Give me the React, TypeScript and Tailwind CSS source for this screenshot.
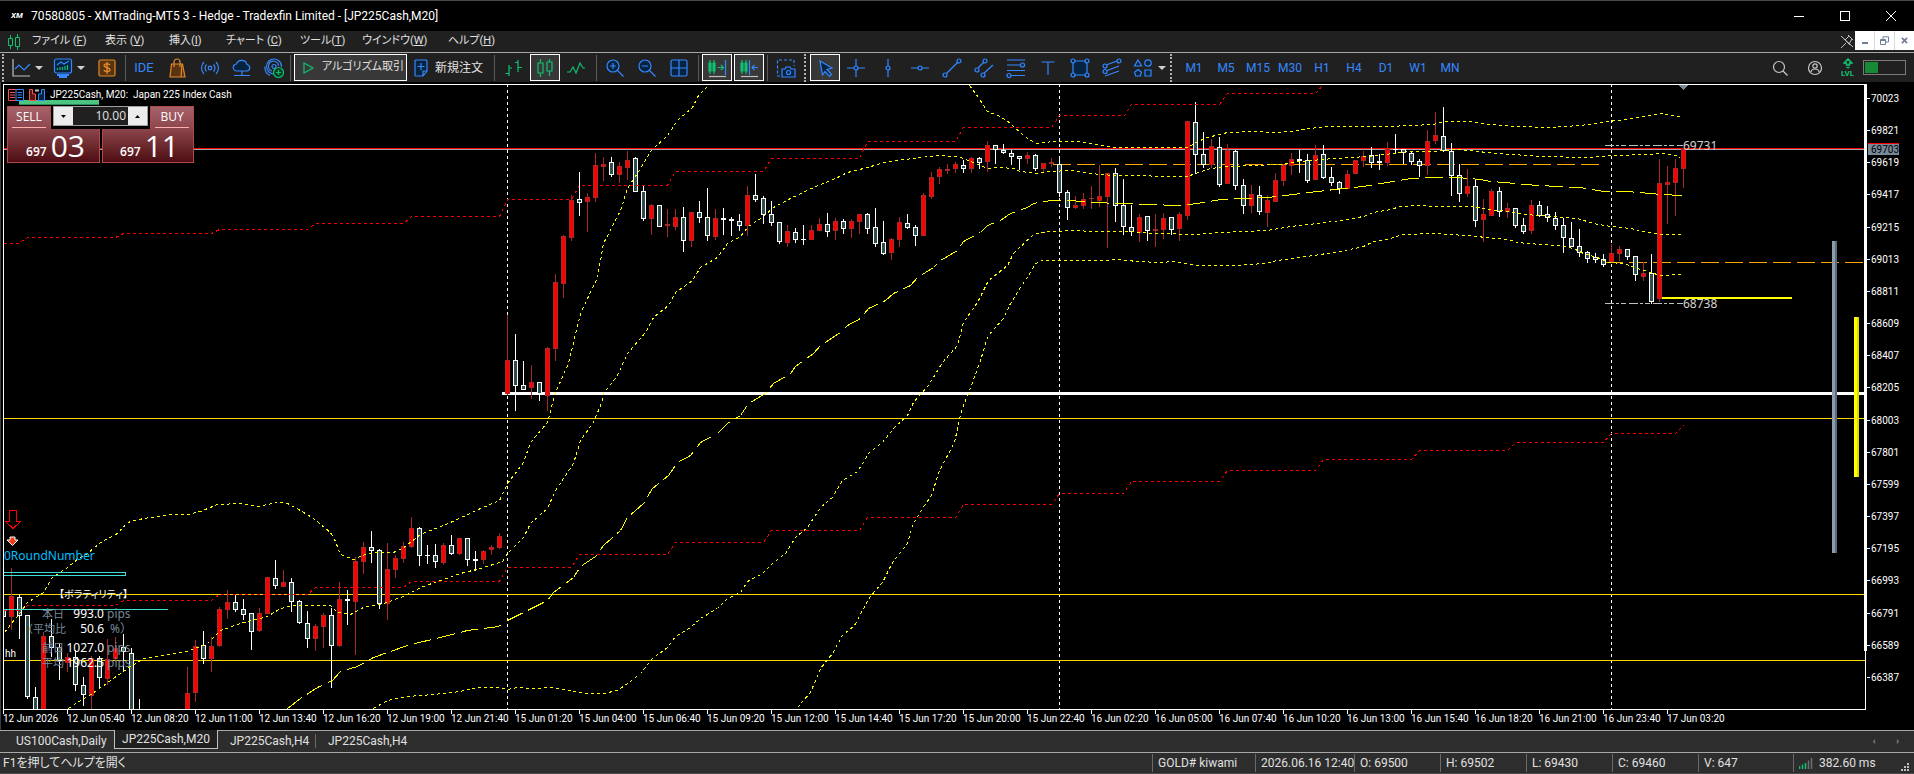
import React from "react";

type Candle = [up: number, high: number, top: number, bottom: number, low: number];

// One row per 20 minute bar, bars sit 8px apart starting at x = 3.
const CANDLES: Candle[] = [
  [0, 609, 609, 617, 617], [1, 568, 596, 617, 630], [0, 594, 597, 616, 639], [0, 615, 615, 697, 699],
  [0, 687, 697, 720, 720], [1, 632, 636, 720, 720], [0, 619, 636, 648, 657], [0, 643, 647, 661, 680],
  [1, 653, 657, 663, 672], [0, 650, 657, 685, 691], [0, 677, 685, 695, 706], [1, 656, 658, 696, 720],
  [0, 656, 658, 678, 688], [1, 639, 659, 679, 685], [1, 637, 648, 659, 662], [0, 634, 647, 652, 671],
  [0, 648, 653, 720, 720], [0, 699, 715, 720, 720], [0, 715, 716, 720, 720], [0, 715, 716, 720, 720],
  [0, 715, 716, 720, 720], [0, 715, 716, 720, 720], [0, 715, 716, 720, 720], [1, 667, 693, 720, 720],
  [1, 640, 646, 693, 702], [0, 631, 645, 659, 664], [1, 637, 646, 659, 672], [1, 607, 609, 646, 647],
  [1, 590, 602, 610, 619], [0, 595, 602, 610, 612], [0, 599, 609, 615, 620], [0, 613, 613, 632, 650],
  [1, 608, 613, 631, 632], [1, 577, 577, 614, 614], [0, 560, 578, 586, 589], [1, 570, 582, 587, 587],
  [0, 578, 582, 602, 612], [0, 600, 601, 623, 624], [0, 611, 623, 639, 648], [1, 624, 626, 639, 651],
  [1, 613, 615, 627, 648], [0, 608, 615, 646, 688], [1, 582, 599, 646, 647], [0, 590, 599, 601, 625],
  [1, 557, 561, 602, 655], [1, 542, 547, 562, 574], [0, 531, 547, 551, 563], [0, 549, 550, 604, 609],
  [1, 543, 569, 604, 620], [1, 555, 558, 570, 578], [1, 542, 546, 559, 563], [1, 517, 528, 547, 548],
  [0, 527, 528, 556, 566], [0, 545, 555, 556, 564], [0, 544, 555, 562, 568], [1, 543, 545, 563, 565],
  [0, 535, 545, 554, 555], [1, 538, 538, 554, 555], [0, 538, 538, 560, 566], [0, 551, 559, 561, 571],
  [1, 550, 551, 560, 564], [1, 545, 547, 550, 555], [1, 533, 536, 548, 549], [1, 315, 360, 394, 395],
  [0, 334, 360, 386, 411], [0, 361, 385, 390, 390], [1, 365, 382, 388, 399], [0, 382, 382, 394, 401],
  [1, 347, 348, 396, 411], [1, 274, 282, 349, 361], [1, 235, 236, 284, 298], [1, 195, 200, 238, 241],
  [0, 172, 199, 203, 216], [1, 193, 197, 202, 232], [1, 153, 165, 198, 202], [1, 157, 164, 167, 181],
  [0, 157, 162, 175, 177], [1, 162, 166, 175, 183], [1, 151, 160, 168, 180], [0, 157, 158, 192, 192],
  [0, 186, 191, 219, 221], [1, 204, 205, 219, 235], [0, 205, 205, 227, 227], [1, 209, 224, 226, 237],
  [1, 209, 217, 227, 230], [0, 207, 217, 241, 252], [1, 212, 212, 241, 247], [0, 201, 212, 218, 223],
  [0, 188, 217, 236, 241], [1, 209, 218, 237, 240], [0, 208, 218, 220, 235], [0, 217, 219, 221, 236],
  [0, 214, 221, 226, 231], [1, 186, 195, 226, 236], [0, 174, 195, 200, 202], [0, 196, 198, 215, 224],
  [0, 201, 214, 223, 226], [0, 222, 222, 242, 244], [1, 225, 231, 243, 247], [0, 228, 232, 240, 243],
  [0, 225, 239, 240, 245], [1, 225, 230, 240, 240], [1, 218, 224, 231, 231], [0, 213, 224, 232, 237],
  [1, 218, 221, 231, 240], [0, 219, 221, 229, 234], [1, 219, 221, 229, 238], [1, 214, 214, 222, 234],
  [0, 213, 214, 229, 234], [0, 208, 227, 244, 247], [0, 221, 242, 254, 255], [1, 238, 239, 253, 260],
  [1, 217, 222, 240, 247], [0, 214, 223, 228, 229], [0, 225, 227, 236, 246], [1, 193, 195, 236, 236],
  [1, 172, 177, 197, 199], [1, 167, 169, 177, 184], [1, 164, 169, 171, 174], [1, 162, 164, 169, 173],
  [0, 160, 165, 169, 173], [1, 157, 158, 169, 173], [0, 157, 158, 163, 169], [1, 141, 145, 162, 172],
  [0, 145, 145, 150, 164], [0, 144, 150, 153, 154], [0, 150, 153, 157, 165], [0, 156, 156, 159, 170],
  [1, 152, 155, 159, 164], [0, 154, 155, 169, 171], [1, 163, 163, 169, 172], [1, 158, 162, 164, 167],
  [0, 156, 164, 193, 197], [0, 190, 192, 208, 220], [1, 196, 205, 208, 209], [1, 193, 199, 206, 209],
  [1, 186, 198, 199, 209], [1, 165, 196, 201, 207], [1, 173, 173, 197, 248], [0, 168, 173, 206, 222],
  [0, 179, 205, 227, 235], [0, 205, 227, 232, 236], [1, 214, 217, 233, 242], [0, 216, 216, 231, 241],
  [1, 214, 229, 231, 247], [1, 213, 218, 230, 239], [0, 217, 217, 230, 235], [1, 212, 214, 229, 241],
  [1, 121, 121, 216, 220], [0, 102, 122, 155, 174], [0, 132, 154, 165, 168], [1, 139, 146, 165, 168],
  [0, 137, 147, 185, 187], [1, 144, 150, 184, 184], [0, 150, 151, 186, 190], [0, 179, 185, 206, 214],
  [1, 185, 194, 206, 213], [0, 186, 195, 212, 215], [1, 195, 200, 213, 227], [1, 173, 180, 202, 202],
  [1, 164, 165, 181, 186], [1, 153, 159, 166, 175], [0, 150, 159, 161, 173], [0, 154, 160, 181, 183],
  [1, 145, 155, 180, 180], [0, 145, 154, 178, 179], [0, 167, 177, 183, 186], [0, 181, 182, 189, 194],
  [1, 170, 174, 189, 189], [1, 160, 160, 174, 174], [1, 151, 156, 161, 167], [0, 147, 155, 163, 168],
  [0, 154, 161, 163, 170], [1, 142, 149, 163, 166], [0, 134, 149, 150, 154], [0, 149, 149, 153, 164],
  [0, 151, 153, 162, 165], [0, 159, 161, 166, 177], [1, 130, 141, 166, 175], [1, 112, 135, 141, 144],
  [0, 107, 136, 151, 152], [0, 143, 151, 176, 196], [0, 164, 175, 194, 202], [1, 169, 186, 194, 197],
  [0, 180, 186, 221, 227], [1, 199, 214, 220, 242], [1, 189, 191, 216, 216], [0, 187, 191, 212, 217],
  [1, 203, 208, 212, 218], [0, 208, 208, 226, 228], [0, 218, 225, 232, 234], [1, 200, 205, 231, 234],
  [0, 201, 205, 216, 217], [0, 206, 214, 218, 222], [0, 212, 218, 226, 230], [0, 218, 225, 238, 253],
  [0, 222, 238, 247, 247], [0, 229, 246, 253, 257], [0, 251, 252, 259, 263], [0, 253, 257, 260, 263],
  [0, 254, 259, 265, 267], [1, 244, 253, 262, 262], [1, 246, 249, 254, 261], [0, 249, 249, 257, 260],
  [0, 256, 256, 275, 281], [1, 262, 273, 277, 281], [0, 254, 273, 302, 304], [1, 159, 183, 299, 302],
  [1, 166, 182, 185, 224], [1, 159, 168, 183, 216], [1, 149, 149, 169, 188],
];

const RED_BANDS = [
  "3,243 18,243 27,237 115,237 123,233 211,233 219,229 307,229 315,223 403,223 411,216 499,216 507,199 571,199 579,185 667,185 675,171 763,171 771,158 859,158 867,141 955,141 963,127 1051,127 1059,115 1124,115 1131,104 1219,104 1227,93 1315,93 1322,85",
  "3,610 19,610 27,605 115,605 123,600 211,600 219,594 307,594 315,587 403,587 411,581 499,581 507,567 571,567 579,554 667,554 675,542 763,542 771,530 859,530 867,517 955,517 963,504 1051,504 1059,493 1123,493 1131,481 1219,481 1227,470 1315,470 1323,459 1411,459 1419,450 1507,450 1515,442 1603,442 1611,433 1675,433 1683,425",
];

const YELLOW_BANDS = [
  "4,632 11,623 20,612 27,602 43,592 52,577 67,567 78,558 87,553 100,542 117,533 127,522 143,518 170,514 187,514 200,511 217,504 240,503 257,506 277,502 287,503 300,510 313,518 330,532 335,541 340,554 353,559 367,553 380,552 393,552 402,548 411,541 420,534 450,522 480,508 499,500 507,483 517,470 523,462 530,442 547,422 552,403 555,392 568,363 580,313 597,277 603,243 620,210 627,188 640,168 651,150 667,135 677,120 692,107 698,95 708,85",
  "969,85 978,97 987,111 1000,116 1010,123 1023,135 1035,143 1053,141 1077,141 1100,145 1115,147 1188,147 1195,142 1207,137 1227,132 1257,131 1273,132 1293,131 1303,129 1325,126 1387,126 1410,125 1433,124 1443,121 1470,121 1490,124 1500,125 1517,126 1547,127 1580,125 1607,121 1627,119 1660,113 1682,117",
  "68,708 80,700 92,693 113,678 127,668 143,658 160,655 187,651 207,643 220,630 240,623 267,616 280,608 293,605 330,605 337,612 350,614 363,607 383,603 403,596 420,587 440,580 460,573 480,568 502,561 507,553 523,537 530,523 547,508 555,490 573,463 580,440 593,422 602,400 603,393 617,375 627,353 645,332 653,317 668,305 675,292 692,280 700,267 717,257 727,243 740,236 748,226 763,216 773,207 790,198 813,187 837,177 847,172 867,167 887,161 913,158 937,155 958,156 970,161 987,168 1000,167 1013,168 1020,171 1037,173 1050,171 1070,170 1090,173 1113,175 1187,176 1195,173 1210,168 1227,166 1280,164 1300,161 1333,158 1367,156 1393,153 1410,151 1433,151 1457,149 1477,151 1497,153 1513,154 1540,156 1587,157 1613,155 1647,154 1662,153 1672,154 1680,157",
  "373,708 387,700 407,696 433,694 453,692 480,687 498,687 507,689 517,687 530,688 553,687 573,691 587,693 603,693 617,690 627,683 640,673 652,658 667,647 675,636 690,627 700,618 717,608 727,598 740,592 747,581 762,573 772,563 785,553 795,537 807,527 820,507 832,497 842,480 857,471 869,452 882,442 894,427 907,415 913,402 917,397 928,385 942,362 957,345 963,322 977,302 988,280 997,273 1007,265 1013,253 1033,234 1047,231 1077,230 1090,231 1127,231 1153,233 1197,234 1220,232 1267,230 1290,226 1317,223 1340,220 1363,216 1373,212 1390,209 1400,206 1417,205 1440,206 1470,206 1497,210 1507,211 1523,214 1540,215 1577,218 1593,223 1610,226 1630,228 1647,232 1660,234 1682,234",
  "797,707 810,692 820,668 832,653 842,635 854,625 862,610 869,597 882,582 892,562 907,543 912,525 924,505 931,495 939,470 954,442 961,410 965,400 968,393 980,360 987,337 992,330 1003,318 1010,303 1020,287 1030,272 1035,263 1042,260 1100,260 1117,259 1137,261 1160,262 1173,261 1187,263 1197,265 1237,265 1263,263 1277,260 1313,255 1340,251 1363,246 1373,241 1390,238 1402,234 1437,233 1477,236 1493,238 1507,239 1517,242 1540,244 1560,245 1573,248 1583,253 1597,257 1608,262 1623,263 1637,268 1650,272 1660,275 1682,274",
];

const MIDDLE_BAND =
  "287,708 300,698 317,687 332,680 340,671 357,666 373,657 387,652 410,644 440,637 467,630 498,626 507,620 523,612 547,600 553,592 573,577 580,566 595,556 603,545 620,530 627,517 643,503 652,488 668,475 677,462 690,455 700,442 717,433 727,423 740,415 748,403 765,393 773,383 790,373 795,366 813,353 820,345 840,332 847,325 860,318 868,308 885,300 893,293 910,285 917,277 933,267 940,260 957,250 963,241 980,232 987,225 1000,220 1010,213 1027,207 1033,203 1050,200 1070,200 1090,202 1123,203 1147,204 1180,205 1197,203 1220,199 1243,198 1267,197 1293,194 1317,191 1343,188 1363,186 1387,182 1410,178 1440,177 1457,177 1480,179 1490,181 1505,182 1523,184 1557,186 1580,187 1603,191 1627,191 1650,193 1660,194 1682,195";

const TIMES = [
  "12 Jun 2026", "12 Jun 05:40", "12 Jun 08:20", "12 Jun 11:00", "12 Jun 13:40", "12 Jun 16:20", "12 Jun 19:00",
  "12 Jun 21:40", "15 Jun 01:20", "15 Jun 04:00", "15 Jun 06:40", "15 Jun 09:20", "15 Jun 12:00", "15 Jun 14:40",
  "15 Jun 17:20", "15 Jun 20:00", "15 Jun 22:40", "16 Jun 02:20", "16 Jun 05:00", "16 Jun 07:40", "16 Jun 10:20",
  "16 Jun 13:00", "16 Jun 15:40", "16 Jun 18:20", "16 Jun 21:00", "16 Jun 23:40", "17 Jun 03:20",
];

const PRICES = [
  70023, 69821, 69619, 69417, 69215, 69013, 68811, 68609, 68407, 68205, 68003, 67801, 67599, 67397, 67195, 66993,
  66791, 66589, 66387,
];

const VOLATILITY = [
  { label: "本日", x: 42, value: "993.0", unit: "pips", y: 618 },
  { label: "（平均比", x: 22, value: "50.6", unit: " %）", y: 633 },
  { label: "前日", x: 42, value: "1027.0", unit: "pips", y: 652 },
  { label: "平均", x: 42, value: "1962.5", unit: "pips", y: 667 },
];

function Chart() {
  return (
    <svg viewBox="0 82 1914 648" className="block w-full bg-black" shapeRendering="crispEdges" role="img" aria-label="JP225Cash M20">
      <defs>
        <clipPath id="plot">
          <rect x="3" y="84" width="1862" height="625" />
        </clipPath>
      </defs>

      <g clipPath="url(#plot)">
        {[507, 1059, 1611].map((x) => (
          <line key={x} x1={x + 0.5} x2={x + 0.5} y1="84" y2="709" stroke="#fff" strokeDasharray="3 3" />
        ))}
        {[418, 594, 660].map((y) => (
          <rect key={y} x="3" y={y} width="1862" height="1" fill="#ffd700" />
        ))}
        <rect x="502" y="392" width="1362" height="3" fill="#fff" />
        <rect x="3" y="148" width="1862" height="1" fill="#f00" />
        <rect x="3" y="149" width="1862" height="1" fill="#a0a8b0" />
        <line x1="1053" x2="1600" y1="164.5" y2="164.5" stroke="#ffa500" strokeDasharray="18 6" />
        <line x1="1605" x2="1863" y1="262.5" y2="262.5" stroke="#ffa500" strokeDasharray="18 6" />

        {CANDLES.map(([up, high, top, bottom, low], i) => {
          const x = 3 + i * 8;
          const line = up ? "#a52a2a" : "#fff";
          const height = Math.max(bottom - top, 1);
          return (
            <g key={i}>
              <rect x={x} y={high} width="1" height={Math.max(low - high, 1)} fill={line} />
              <rect x={x - 2} y={top} width="5" height={height} fill={line} />
              {height > 2 && (
                <rect x={x - 1} y={top + 1} width="3" height={height - 2} fill={up ? "#f00" : "#2f4f4f"} />
              )}
            </g>
          );
        })}

        <g fill="none">
          {RED_BANDS.map((points) => (
            <polyline key={points} points={points} stroke="#f00" strokeDasharray="3 3" transform="translate(0.5 0.5)" />
          ))}
          {YELLOW_BANDS.map((points) => (
            <polyline key={points} points={points} stroke="#ff0" strokeDasharray="3 3" transform="translate(0.5 0.5)" />
          ))}
          <polyline points={MIDDLE_BAND} stroke="#ff0" strokeDasharray="18 6" transform="translate(0.5 0.5)" />
          <rect x="0.5" y="572.5" width="125" height="3" stroke="#40e0d0" />
        </g>
        <rect x="3" y="609" width="165" height="1" fill="#40e0d0" />

        <rect x="1662" y="297" width="130" height="2" fill="#ff0" />
        <path d="M1605 145.5h78M1605 303.5h78" stroke="#c0c0c0" strokeDasharray="9 2 3 2 5 3" />
        <path d="M1678 84h11l-5 6h-1z" fill="#778899" />
      </g>

      {/* frame and axis ticks */}
      <rect x="0" y="82" width="1" height="648" fill="#3a3d3d" />
      <path d="M3 84.5h1862M3.5 84v626M3 709.5h1863M1865.5 650v60" stroke="#fff" fill="none" />
      <rect x="1864" y="84" width="3" height="567" fill="#fff" />
      <rect x="1832" y="241" width="3" height="312" fill="#8a9bab" />
      <rect x="1835" y="241" width="2" height="312" fill="#5c6b7a" />
      <rect x="1854" y="317" width="3" height="160" fill="#ff0" />
      <rect x="1857" y="317" width="2" height="160" fill="#dcdc00" />

      <g className="font-['Roboto',sans-serif] text-[10px]" fill="#fff">
        {PRICES.map((price, i) => {
          const y = Math.round(98 + i * 32.16);
          return (
            <g key={price}>
              <rect x="1867" y={y} width="3" height="1" />
              <text x="1871" y={y + 4}>{price}</text>
            </g>
          );
        })}
        {TIMES.map((time, i) => (
          <g key={time}>
            <rect x={3 + i * 64} y="709" width="1" height="5" />
            <text x={3 + i * 64} y="722">{time}</text>
          </g>
        ))}
        <rect x="1868" y="143" width="31" height="12" fill="#778899" />
        <rect x="1868" y="143" width="31" height="1" fill="#f00" />
        <text x="1871" y="153" fill="#000">69703</text>
        <text x="5" y="657">hh</text>
      </g>

      <g className="font-['Noto_Sans',sans-serif] text-[12px]" fill="#d3d3d3">
        <text x="1683" y="150">69731</text>
        <text x="1683" y="308">68738</text>
      </g>

      <path d="M9.500 510.500h7v11h4l-7.500 7-7.500-7h4z" fill="none" stroke="#f00" />
      <path d="M10 537h5v3h3l-5.500 5.500L7 540h3z" fill="#f03c14" stroke="#fff" shapeRendering="auto" />
      <text x="4" y="560" fill="#00bfff" className="font-['Noto_Sans',sans-serif] text-[12px]">0RoundNumber</text>
      <text x="59" y="598" fill="#fff" className="font-['Noto_Sans_CJK_JP',sans-serif] text-[10px] [font-feature-settings:'palt']">
        【ボラティリティ】
      </text>
      <g className="font-['Noto_Sans','Noto_Sans_CJK_JP',sans-serif] text-[12px]">
        {VOLATILITY.map((row) => (
          <g key={row.label} fill="#778899">
            <text x={row.x} y={row.y} className="text-[11px]">{row.label}</text>
            <text x="104" y={row.y} textAnchor="end" fill="#fff">{row.value}</text>
            <text x="107" y={row.y} className="whitespace-pre">{row.unit}</text>
          </g>
        ))}
      </g>
    </svg>
  );
}

function PriceButton({ side, price, flip = false }: { side: string; price: string; flip?: boolean }) {
  return (
    <button className={flip ? "flex w-[92px] flex-col items-end text-white" : "flex w-[93px] flex-col items-start text-white"}>
      <span className="flex h-[23px] w-11 flex-col items-center border border-b-0 border-[#b04a4a] bg-gradient-to-b from-[#a8626a] to-[#8c454b] px-1">
        <span className="h-5 text-[12px] leading-5">{side}</span>
        <span className="h-px w-full bg-[#ffb0b0]" />
      </span>
      <span className="flex h-[34px] w-full items-end justify-end gap-1 border border-t-0 border-[#b04a4a] bg-gradient-to-b from-[#8c454b] to-[#4e0d13] pr-[14px] pb-1">
        <span className="text-[12px] leading-3 font-semibold">697</span>
        <span className="text-[30px] leading-6">{price}</span>
      </span>
    </button>
  );
}

function TradePanel() {
  return (
    <div className="absolute top-6 left-[7px] flex gap-[2px] font-['Open_Sans',sans-serif]">
      <PriceButton side="SELL" price="03" />
      <PriceButton side="BUY" price="11" flip />
      <div className="absolute top-0 left-[46px] flex h-5 w-[95px] items-stretch border border-[#a0a0a0] bg-[#202020]">
        <button aria-label="Decrease volume" className="flex w-[19px] items-center justify-center bg-[#ececec]">
          <Caret className="h-[3px] w-[5px] text-black" />
        </button>
        <input
          aria-label="Volume"
          defaultValue="10.00"
          className="w-0 flex-1 bg-transparent pr-[2px] text-right text-[12px] text-[#e0e0e0] outline-none"
        />
        <button aria-label="Increase volume" className="flex w-[19px] items-center justify-center bg-[#ececec]">
          <Caret className="h-[3px] w-[5px] rotate-180 text-black" />
        </button>
      </div>
    </div>
  );
}

function Caret({ className }: { className: string }) {
  return (
    <svg viewBox="0 0 8 5" className={className} fill="currentColor" preserveAspectRatio="none">
      <path d="M0 0h8L4 5z" />
    </svg>
  );
}

function Icon({ children, className = "text-[#3588ff]" }: { children: React.ReactNode; className?: string }) {
  return (
    <svg viewBox="0 0 20 20" className={`size-5 shrink-0 ${className}`} fill="none" stroke="currentColor" strokeWidth="1.200">
      {children}
    </svg>
  );
}

function Tool({ label, children, active = false }: { label: string; children: React.ReactNode; active?: boolean }) {
  return (
    <button
      aria-label={label}
      className={
        active
          ? "flex h-[27px] w-[30px] shrink-0 items-center justify-center border border-white bg-[#383838]"
          : "flex h-[27px] w-8 shrink-0 items-center justify-center"
      }
    >
      {children}
    </button>
  );
}

const Separator = () => <div className="h-[26px] w-px shrink-0 bg-[#5a5a5a]" />;
const Grip = () => <div className="h-7 shrink-0 border-l-2 border-dotted border-[#b0b0b0]" />;

const NAVY = "#06243f";

function Toolbar() {
  return (
    <div className="flex h-[29px] items-center bg-[#202020] pl-[2px] text-[12px]">
      <Grip />
      <button aria-label="Chart type" className="flex w-10 items-center justify-end gap-1 pr-px">
        <Icon>
          <path d="M2 1v17h17" stroke="#c0c0c0" />
          <path d="m4 11 4-4 5 5 6-6" />
        </Icon>
        <Caret className="h-1 w-2 text-[#d0d0d0]" />
      </button>
      <button aria-label="Indicators" className="flex w-[41px] items-center justify-end gap-1">
        <Icon>
          <rect x="1.500" y="1" width="17" height="14" rx="2" fill={NAVY} />
          <path d="m4 7 4-3 3 2 5-3" />
          <path d="M4.500 12v-2M7 12V9M9.500 12v-3M12 12V8M14.500 12V7" stroke="#10c070" />
          <path d="M4 17h12M6 19h8" strokeWidth="2" />
        </Icon>
        <Caret className="h-1 w-2 text-[#d0d0d0]" />
      </button>
      <div className="flex w-10 items-center justify-center pl-1">
        <Icon className="text-[#e08a2c]">
          <rect x="2" y="2" width="16" height="16" rx="1.500" fill="#5a3410" />
          <path d="M13 7c-1-1.500-6-1.700-6 .6 0 2.300 6 1.600 6 4.200 0 2.400-5.200 2.200-6.300.4M10 4v12" strokeWidth="1.400" />
        </Icon>
      </div>
      <Separator />
      <button className="w-[36px] shrink-0 text-[13px] text-[#3588ff]">IDE</button>
      <div className="flex">
        <Tool label="Market">
          <Icon className="text-[#e08a2c]">
            <path d="M3.500 6h11l2.500 13H2z" fill="#5a3410" />
            <path d="M6 9V4a3 3 0 0 1 6 0v5M14 6l-1 13" />
          </Icon>
        </Tool>
        <Tool label="Signals">
          <Icon>
            <circle cx="10" cy="10" r="1.800" />
            <path d="M6.500 6.500a5 5 0 0 0 0 7M13.500 6.500a5 5 0 0 1 0 7M4 4a8.500 8.500 0 0 0 0 12M16 4a8.500 8.500 0 0 1 0 12" />
          </Icon>
        </Tool>
        <Tool label="Virtual hosting">
          <Icon>
            <path d="M5 13a3.500 3.500 0 0 1-.5-7A5.500 5.500 0 0 1 15 6.500a3.300 3.300 0 0 1 0 6.500z" fill={NAVY} />
            <path d="M10 13v4M2 17.500h16" />
          </Icon>
        </Tool>
        <Tool label="Copy trading">
          <Icon>
            <path d="M10 16a7.500 7.500 0 1 1 7.500-7M8 13a5 5 0 1 1 6.500-5" />
            <circle cx="10" cy="8.500" r="2" />
            <path d="M6 17.500a9 9 0 0 1-5-9" />
            <circle cx="14.500" cy="14.500" r="5" fill="#063d24" stroke="#10c070" />
            <path d="M14.500 12v5M12 14.500h5" stroke="#10c070" />
          </Icon>
        </Tool>
      </div>
      <div className="flex items-center gap-[3px]">
        <Separator />
        <button className="flex h-[27px] w-[113px] items-center gap-1 border border-white bg-[#383838] px-[3px] text-[11px] whitespace-nowrap text-[#e0e0e0] [font-feature-settings:'palt']">
          <Icon className="text-[#10c070]">
            <path d="m6 5 9 5-9 5z" />
          </Icon>
          アルゴリズム取引
        </button>
      </div>
      <button className="flex w-[87px] items-center gap-1 pl-1 whitespace-nowrap text-[#e0e0e0]">
        <Icon>
          <path d="M5 2h10a1 1 0 0 1 1 1v10l-4 5H5a1 1 0 0 1-1-1V3a1 1 0 0 1 1-1zM16 13h-4v5" fill={NAVY} />
          <path d="M10 5v7M6.500 8.500h7" />
        </Icon>
        新規注文
      </button>
      <Separator />
      <div className="flex items-center pl-[3px]">
        <Tool label="Bar chart">
          <Icon className="text-[#10c070]">
            <path d="M5 7v11M1.500 15.500H5M5 10h3M14 2v12M11 4.500h3M14 9.500h4" />
          </Icon>
        </Tool>
        <Tool label="Candlesticks" active>
          <CandleIcon />
        </Tool>
        <Tool label="Line chart">
          <Icon className="text-[#10c070]">
            <path d="M1 14h3l3-5 3 6 4-10 3 5h2" />
          </Icon>
        </Tool>
      </div>
      <div className="flex items-center pl-1">
        <Separator />
        <Tool label="Zoom in">
          <Icon className="ml-1 text-[#3588ff]">
            <circle cx="8" cy="8" r="6" fill={NAVY} />
            <path d="m12.500 12.500 6 6M8 5v6M5 8h6" />
          </Icon>
        </Tool>
        <Tool label="Zoom out">
          <Icon className="ml-1 text-[#3588ff]">
            <circle cx="8" cy="8" r="6" fill={NAVY} />
            <path d="m12.500 12.500 6 6M5 8h6" />
          </Icon>
        </Tool>
        <Tool label="Tile windows">
          <Icon className="ml-1 text-[#3588ff]">
            <rect x="2" y="2" width="16" height="16" rx="1.500" fill={NAVY} />
            <path d="M10 2v16M2 10h16" />
          </Icon>
        </Tool>
      </div>
      <div className="flex items-center gap-[3px] pl-[5px]">
        <Separator />
        <div className="flex gap-[2px]">
          <Tool label="Auto scroll" active>
            <Icon className="text-[#10c070]">
              <path d="M3 2v14M7 2v14M2 5h2v8H2zM6 5h2v8H6zM10.500 9.500h6M14 7l2.500 2.500L14 12" />
              <path d="M18.500 2v15" stroke="#3588ff" />
              <path d="M2 18.500h17" stroke="#c0c0c0" />
            </Icon>
          </Tool>
          <Tool label="Chart shift" active>
            <Icon className="text-[#10c070]">
              <path d="M3 2v14M7 2v14M2 5h2v8H2zM6 5h2v8H6z" />
              <path d="M10.500 2v15M19 9.500h-6M15.500 7 13 9.500l2.500 2.500" stroke="#3588ff" />
              <path d="M2 18.500h17" stroke="#c0c0c0" />
            </Icon>
          </Tool>
        </div>
        <Separator />
      </div>
      <Tool label="Screenshot">
        <Icon className="ml-1 text-[#3588ff]">
          <path d="M4 18H1.500V2H18v6" strokeDasharray="3 2" />
          <path d="M6 11h3l1-2h4l1 2h4v8H6z" fill={NAVY} />
          <circle cx="12.500" cy="14.500" r="2" />
        </Icon>
      </Tool>
      <div className="flex items-center gap-1 pl-1">
        <Grip />
        <Tool label="Cursor" active>
          <Icon>
            <path d="m5 3 12 7-5 1.500 4.500 5-2 2-4.500-5L7.500 17z" fill={NAVY} />
          </Icon>
        </Tool>
      </div>
      <Tool label="Crosshair">
        <Icon>
          <path d="M10 1v7M10 12v7M1 10h7M12 10h7" />
          <circle cx="10" cy="10" r="2" fill={NAVY} />
        </Icon>
      </Tool>
      <Tool label="Vertical line">
        <Icon>
          <path d="M10 1v7M10 12v7" />
          <circle cx="10" cy="10" r="2" fill={NAVY} />
        </Icon>
      </Tool>
      <Tool label="Horizontal line">
        <Icon>
          <path d="M1 10h7M12 10h7" />
          <circle cx="10" cy="10" r="2" fill={NAVY} />
        </Icon>
      </Tool>
      <Tool label="Trendline">
        <Icon>
          <path d="M4.500 15.500 15.500 4.500" />
          <circle cx="3" cy="17" r="2" fill={NAVY} />
          <circle cx="17" cy="3" r="2" fill={NAVY} />
        </Icon>
      </Tool>
      <Tool label="Channel">
        <Icon>
          <path d="m4 10 6-6M8 17l11-10" />
          <circle cx="3" cy="12" r="2" fill={NAVY} />
          <circle cx="11" cy="3" r="2" fill={NAVY} />
          <circle cx="9" cy="17" r="2" fill={NAVY} />
        </Icon>
      </Tool>
      <Tool label="Fibonacci">
        <Icon>
          <path d="M1 2h18M1 7h13M1 12.500h18M5 17.500h14" />
          <circle cx="16.500" cy="7" r="2" fill={NAVY} />
          <circle cx="3" cy="17.500" r="2" fill={NAVY} />
        </Icon>
      </Tool>
      <Tool label="Text">
        <Icon>
          <path d="M3.500 4h13M10 4v13" />
        </Icon>
      </Tool>
      <Tool label="Rectangle">
        <Icon>
          <path d="M3 3h14v14H3z" fill={NAVY} />
          {[3, 17].map((cx) => [3, 17].map((cy) => <circle key={`${cx}-${cy}`} cx={cx} cy={cy} r="2" fill={NAVY} />))}
        </Icon>
      </Tool>
      <Tool label="Equidistant lines">
        <Icon>
          <path d="m4 7 11-4M4 13l13-5M3 18l14-5" />
          <circle cx="3" cy="8" r="2" fill={NAVY} />
          <circle cx="17" cy="3" r="2" fill={NAVY} />
          <circle cx="3" cy="13.500" r="2" fill={NAVY} />
        </Icon>
      </Tool>
      <button aria-label="Shapes" className="flex w-[42px] items-center justify-center gap-[5px]">
        <Icon>
          <path d="m5 2 3.500 6h-7z" fill={NAVY} />
          <circle cx="15" cy="5" r="3.200" fill={NAVY} />
          <path d="m5 11.500 3.500 2.700L7.300 18H2.700l-1.200-3.800zM12 12h6v6h-6z" fill={NAVY} />
        </Icon>
        <Caret className="h-1 w-2 text-[#d0d0d0]" />
      </button>
      <div className="flex items-center gap-[6px]">
        <Grip />
        <div className="flex">
          {["M1", "M5", "M15", "M30", "H1", "H4", "D1", "W1", "MN"].map((frame) => (
            <button key={frame} className="w-8 text-center text-[#3588ff]">
              {frame}
            </button>
          ))}
        </div>
      </div>
      <div className="ml-auto flex items-center gap-[15px] pr-2">
        <button aria-label="Search">
          <Icon className="text-[#c8c8c8]">
            <circle cx="9" cy="9" r="5.500" />
            <path d="m13 13 4.500 4.500" />
          </Icon>
        </button>
        <button aria-label="Account">
          <Icon className="text-[#c8c8c8]">
            <circle cx="10" cy="10" r="6.500" />
            <circle cx="10" cy="8" r="2.200" />
            <path d="M6 14c.5-4 7.500-4 8 0" />
          </Icon>
        </button>
        <div className="flex items-center gap-2">
          <div className="flex h-5 w-[15px] flex-col items-center justify-between text-[8px] leading-[8px] font-bold text-[#10c070]">
            <svg viewBox="0 0 10 11" className="h-[11px] w-[10px]" fill="none" stroke="currentColor" strokeWidth="1.500">
              <path d="M5 1 1 5h2.500v2h3V5H9zM3.500 9.500h3" />
            </svg>
            LVL
          </div>
          <div className="h-[15px] w-[43px] border border-[#7a7a7a] p-px">
            <div className="h-full w-[13px] bg-[#178a35]" />
          </div>
        </div>
      </div>
    </div>
  );
}

function CandleIcon() {
  return (
    <Icon className="text-[#10c070]">
      <path d="M5.500 1v4M5.500 15v4M3 5h5v10H3zM14.500 1v3M14.500 13v5M12 4h5v9h-5z" />
    </Icon>
  );
}

const MENU = [
  { name: "ファイル (", hotkey: "F", width: "w-[73px]" },
  { name: "表示 (", hotkey: "V", width: "w-16" },
  { name: "挿入(", hotkey: "I", width: "w-[57px]" },
  { name: "チャート (", hotkey: "C", width: "w-[74px]" },
  { name: "ツール(", hotkey: "T", width: "w-[62px]" },
  { name: "ウインドウ(", hotkey: "W", width: "w-[86px]" },
  { name: "ヘルプ(", hotkey: "H", width: "w-[60px]" },
];

const STATUS = [
  { text: "GOLD# kiwami", width: "w-[103px]" },
  { text: "2026.06.16 12:40", width: "w-[99px]" },
  { text: "O: 69500", width: "w-[86px]" },
  { text: "H: 69502", width: "w-[86px]" },
  { text: "L: 69430", width: "w-[86px]" },
  { text: "C: 69460", width: "w-[86px]" },
  { text: "V: 647", width: "w-[95px]" },
];

export default function App() {
  return (
    <div className="w-full overflow-hidden bg-black font-['Roboto','Noto_Sans_CJK_JP',sans-serif] text-[12px] text-[#e0e0e0]">
      <header className="flex h-[31px] items-center border-t border-[#444a4a] bg-black pl-[11px] text-white">
        <span className="w-5 text-[8px] font-bold italic">XM</span>
        <h1>70580805 - XMTrading-MT5 3 - Hedge - Tradexfin Limited - [JP225Cash,M20]</h1>
        <div className="ml-auto flex h-full">
          <button aria-label="Minimize" className="flex w-[46px] items-center justify-center">
            <span className="h-px w-[10px] bg-white" />
          </button>
          <button aria-label="Maximize" className="flex w-[46px] items-center justify-center">
            <span className="size-[10px] border border-white" />
          </button>
          <button aria-label="Close" className="flex w-[46px] items-center justify-center">
            <svg viewBox="0 0 10 10" className="size-[10px]" stroke="#fff">
              <path d="m0 0 10 10M10 0 0 10" />
            </svg>
          </button>
        </div>
      </header>

      <nav className="flex h-[22px] items-center border-b border-[#a8a8a8] bg-[#202020] pl-1 text-[11px]">
        <span className="flex w-7 items-center pl-[3px]">
          <svg viewBox="0 0 14 16" className="h-4 w-[14px]" fill="none" stroke="#10c070">
            <path d="M3.500 1v3M3.500 12v3M1.500 4.500h4v7h-4zM10.500 0v3M10.500 13v3M8.500 3.500h4v9h-4z" />
          </svg>
        </span>
        {MENU.map((item) => (
          <button key={item.hotkey} className={`${item.width} shrink-0 text-left whitespace-nowrap [font-feature-settings:'palt']`}>
            {item.name}
            <u>{item.hotkey}</u>)
          </button>
        ))}
        <div className="ml-auto flex h-full items-start">
          <svg viewBox="0 0 14 16" className="mt-[2px] h-4 w-4" fill="none" stroke="#c0c0c0">
            <path d="m8 2 5 5M9 3 5 7l4 4 3-5M4 6l6 6M6 10l-5 5M1 3l12 11" />
          </svg>
          <div className="flex gap-px bg-[#d8d8d8]">
            <button aria-label="Minimize chart" className="flex h-[19px] w-[19px] items-center justify-center bg-white pt-1">
              <span className="h-[2px] w-[6px] bg-[#718096]" />
            </button>
            <button aria-label="Restore chart" className="flex h-[19px] w-[19px] items-center justify-center bg-white">
              <svg viewBox="0 0 9 9" className="size-[9px]" fill="none" stroke="#718096">
                <path d="M3 3V.8h5.500V6H6M.5 3.500h5v5h-5zM.5 4.500h5" />
              </svg>
            </button>
            <button aria-label="Close chart" className="flex h-[19px] w-[19px] items-center justify-center bg-white">
              <svg viewBox="0 0 8 8" className="size-[7px]" stroke="#718096" strokeWidth="2">
                <path d="m1 1 6 6M7 1 1 7" />
              </svg>
            </button>
          </div>
        </div>
      </nav>

      <Toolbar />

      <main className="relative">
        <Chart />
        <div className="absolute top-[18px] left-[19px] h-[5px] w-20 border-b border-[#2a8a55] bg-[#4cc482]" />
        <div className="absolute top-[6px] left-2 flex items-center gap-[5px] text-[10px] leading-[14px] text-white">
          <svg viewBox="0 0 16 12" className="h-3 w-4" fill="none">
            <path d="M8 .5H.5v11H8M2 3.500h5M2 6h5M2 8.500h5" stroke="#ff5050" />
            <path d="M8 .5h7.500v11H8zM9.500 3.500H14M9.500 6H14M9.500 8.500H14" stroke="#3588ff" />
          </svg>
          <svg viewBox="0 0 16 12" className="h-3 w-4" fill="none">
            <path d="M.5.5h3V5h3v6.500h-6z" stroke="#ff5050" fill="#501818" />
            <path d="M15.500.5h-3V5h-3v6.500h6z" stroke="#3588ff" fill={NAVY} />
            <path d="M6 1.500h4" stroke="#c0c0c0" strokeWidth="2" />
          </svg>
          <span className="whitespace-pre">JP225Cash, M20:  Japan 225 Index Cash</span>
        </div>
        <TradePanel />
      </main>

      <div className="flex h-[22px] items-start border-t border-[#a8a8a8] bg-[#2d2d2d] leading-[21px] whitespace-nowrap">
        <button className="w-[114px] pl-4 text-left">US100Cash,Daily</button>
        <button className="-mt-px h-[19px] w-[104px] border border-t-0 border-[#c0c0c0] bg-[#202020] leading-[19px]">
          JP225Cash,M20
        </button>
        <button className="w-[97px] pl-3 text-left">JP225Cash,H4</button>
        <div className="mt-[3px] h-[14px] w-px bg-[#6a6a6a]" />
        <button className="pl-3">JP225Cash,H4</button>
        <div className="ml-auto flex h-full items-center gap-[18px] pr-[13px]">
          <Caret className="h-[3px] w-[6px] rotate-90 text-[#6a6a6a]" />
          <Caret className="h-[3px] w-[6px] -rotate-90 text-[#6a6a6a]" />
        </div>
      </div>

      <footer className="flex h-[22px] items-center border-t border-b border-t-[#a8a8a8] border-b-[#4a4a4a] bg-[#2d2d2d] whitespace-nowrap">
        <span className="flex-1 pl-[3px] [font-feature-settings:'palt']">F1を押してヘルプを開く</span>
        {STATUS.map((cell) => (
          <span key={cell.text} className={`${cell.width} h-[18px] border-l border-[#6a6a6a] pl-[5px] leading-[18px]`}>
            {cell.text}
          </span>
        ))}
        <span className="flex h-[18px] w-[121px] items-center gap-[6px] border-l border-[#6a6a6a] pl-[5px]">
          <svg viewBox="0 0 14 11" className="h-[11px] w-[14px]">
            <path d="M.5 11V8M3.500 11V6.500M6.500 11V5" stroke="#10c070" strokeWidth="1.500" />
            <path d="M9.500 11V2.500M12.500 11V0" stroke="#707070" strokeWidth="1.500" />
          </svg>
          382.60 ms
          <svg viewBox="0 0 9 9" className="mr-1 ml-auto size-[9px] self-end" fill="#c0c0c0">
            <path d="M6 0h2v2H6zM3 3h2v2H3zM6 3h2v2H6zM0 6h2v2H0zM3 6h2v2H3zM6 6h2v2H6z" />
          </svg>
        </span>
      </footer>
    </div>
  );
}
